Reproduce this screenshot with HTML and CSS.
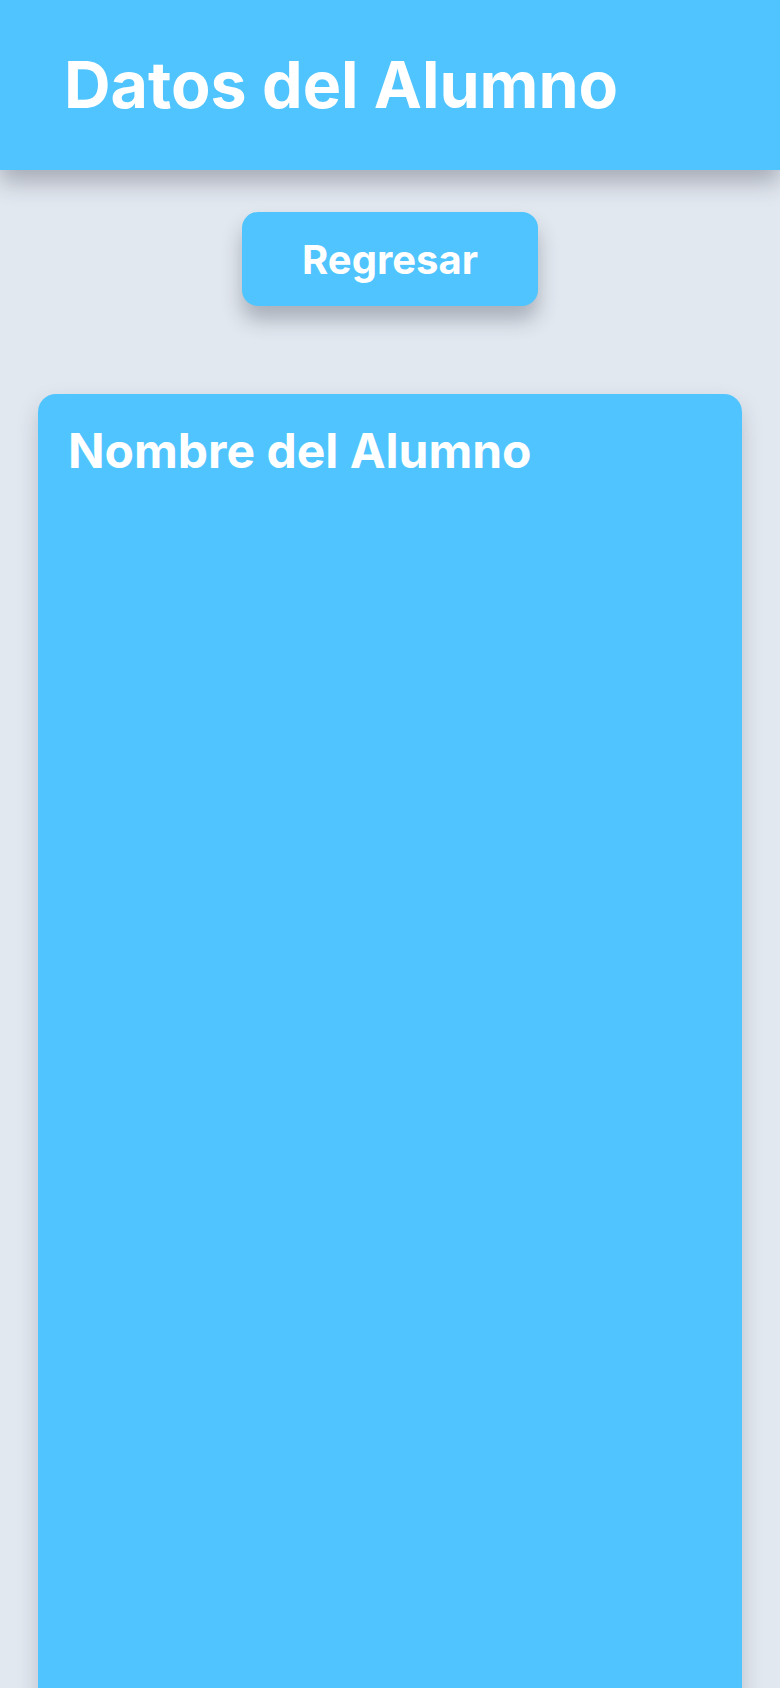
FILE: index.html
```html
<!DOCTYPE html>
<html lang="es">
<head>
<meta charset="utf-8">
<title>Datos del Alumno</title>
<link rel="stylesheet" href="styles.css">
</head>
<body>
<header class="topbar">
  <h1 class="topbar-title">Datos del Alumno</h1>
</header>
<main class="content">
  <button class="back-btn" type="button">Regresar</button>
  <section class="card">
    <h2 class="card-title">Nombre del Alumno</h2>
  </section>
</main>
</body>
</html>
```
FILE: styles.css
```css
* { box-sizing: border-box; }
html, body { margin: 0; padding: 0; }
body {
  background: #e2e8f0;
  font-family: Inter, "Noto Sans", sans-serif;
  color: #fff;
  overflow: hidden;
  height: 1688px;
}
.topbar {
  height: 170px;
  background: #50c4fe;
  display: flex;
  align-items: center;
  padding-left: 64px;
  box-shadow: 0 12px 22px rgba(40, 45, 60, 0.32);
  position: relative;
  z-index: 1;
}
.topbar-title {
  margin: 0;
  font-size: 64.5px;
  font-weight: 700;
  line-height: 1;
}
.content {
  display: flex;
  flex-direction: column;
  align-items: center;
  padding: 42px 38px 0;
}
.back-btn {
  width: 296px;
  height: 94px;
  border: none;
  border-radius: 16px;
  background: #50c4fe;
  color: #fff;
  font-family: inherit;
  font-size: 40px;
  font-weight: 700;
  box-shadow: 0 14px 20px rgba(40, 45, 60, 0.3);
}
.card {
  margin-top: 88px;
  align-self: stretch;
  min-height: 1400px;
  background: #50c4fe;
  border-radius: 18px;
  padding: 28px 30px;
  box-shadow: 0 10px 22px -2px rgba(40, 45, 60, 0.25);
}
.card-title {
  margin: 0;
  font-size: 48px;
  font-weight: 700;
  line-height: 1.2;
}
```
